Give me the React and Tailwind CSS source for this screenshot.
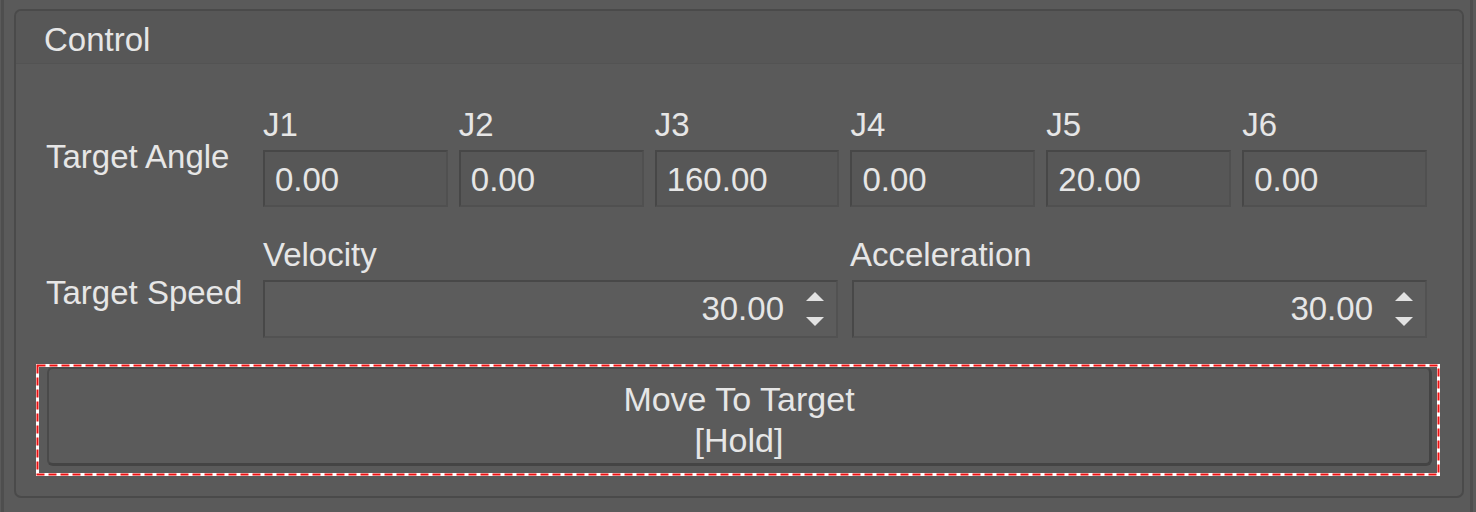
export default function App() {
  const font = { fontFamily: '"Liberation Sans", Arial, sans-serif' };
  const joints = [
    ["J1", "0.00"],
    ["J2", "0.00"],
    ["J3", "160.00"],
    ["J4", "0.00"],
    ["J5", "20.00"],
    ["J6", "0.00"],
  ];
  const Spin = ({ value }) => (
    <div className="flex h-[58px] items-center border-2 border-[#484848] border-b-[#525252] border-r-[#525252] bg-[#5c5c5c]">
      <div className="flex-1 pr-[22px] text-right">{value}</div>
      <div className="mr-[12px] flex w-[18px] flex-col items-center gap-[16px]">
        <svg width="18" height="9" viewBox="0 0 18 9">
          <path d="M9 0 L18 9 L0 9 Z" fill="#e2e2e2" />
        </svg>
        <svg width="18" height="9" viewBox="0 0 18 9">
          <path d="M0 0 L18 0 L9 9 Z" fill="#e2e2e2" />
        </svg>
      </div>
    </div>
  );
  return (
    <div
      className="h-[512px] w-[1476px] overflow-hidden bg-[#5a5a5a] text-[33px] leading-[36px] text-[#e6e6e6]"
      style={font}
    >
      <div className="ml-[1px] h-[512px] w-[1472px] border-x-[3px] border-[#4e4e4e] pl-[10px] pr-[5px] pt-[9px]">
        <div className="h-[489px] w-[1450px] rounded-[7px] border-2 border-[#4a4a4a]">
          <div className="flex h-[53px] items-center rounded-t-[6px] border-b border-[#535353] bg-[#575757] pl-[28px] pt-[6px]">
            Control
          </div>
          <div className="pl-[30px] pr-[35px]">
            {/* Target angle row */}
            <div className="mt-[43px] flex">
              <div className="mt-[32px] w-[217px] shrink-0">Target Angle</div>
              <div className="grid flex-1 grid-cols-6 gap-x-[11px]">
                {joints.map(([j, v]) => (
                  <div key={j} className="flex flex-col">
                    <div className="h-[36px]">{j}</div>
                    <div className="mt-[7px] flex h-[57px] items-center border-2 border-[#474747] border-b-[#505050] border-r-[#505050] bg-[#575757] pl-[10px] pt-[2px]">
                      {v}
                    </div>
                  </div>
                ))}
              </div>
            </div>
            {/* Target speed row */}
            <div className="mt-[30px] flex">
              <div className="mt-[38px] w-[217px] shrink-0">Target Speed</div>
              <div className="grid flex-1 grid-cols-2 gap-x-[14px]">
                <div className="flex flex-col">
                  <div className="h-[36px]">Velocity</div>
                  <div className="mt-[7px]">
                    <Spin value="30.00" />
                  </div>
                </div>
                <div className="flex flex-col">
                  <div className="-ml-[2px] h-[36px]">Acceleration</div>
                  <div className="mt-[7px]">
                    <Spin value="30.00" />
                  </div>
                </div>
              </div>
            </div>
          </div>
          {/* Button with focus rect */}
          <div className="relative ml-[20px] mt-[26px] h-[112px] w-[1404px] pl-[11px] pr-[8px] pt-[3px]">
            <svg
              className="absolute inset-0"
              width="1404"
              height="112"
              viewBox="0 0 1404 112"
            >
              <rect x="1.5" y="1.5" width="1401" height="109" fill="none" stroke="#ffffff" strokeWidth="3" />
              <rect x="1.5" y="1.5" width="1401" height="109" fill="none" stroke="#ee1111" strokeWidth="2" strokeDasharray="8 4" />
            </svg>
            <div className="flex h-[99px] flex-col items-center justify-center rounded-[6px] border-2 border-[#4a4a4a] border-b-[3px] border-b-[#444444] border-r-[3px] border-r-[#444444] bg-[#5b5b5b] pt-[8px] text-[34px] leading-[41px]">
              <div>Move To Target</div>
              <div>[Hold]</div>
            </div>
          </div>
        </div>
      </div>
    </div>
  );
}
